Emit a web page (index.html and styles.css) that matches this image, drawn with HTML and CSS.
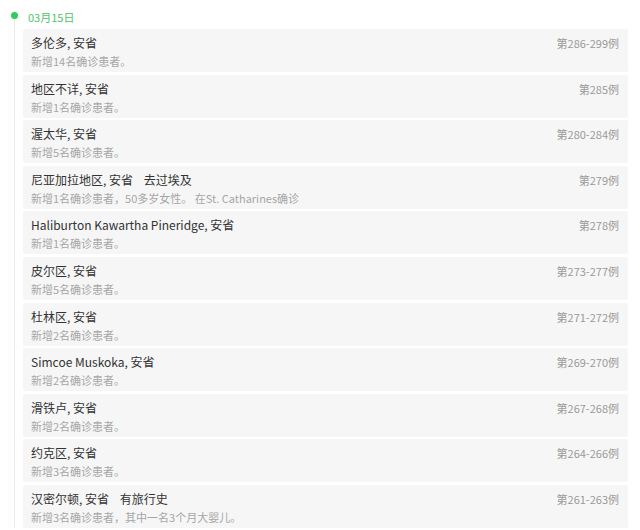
FILE: index.html
```html
<!DOCTYPE html>
<html lang="zh-CN">
<head>
    <meta charset="UTF-8">
    <title>确诊病例</title>
    <link rel="stylesheet" href="styles.css">
</head>
<body>
    <div class="timeline">
        <div class="day">
            <span class="dot"></span>
            <span class="date">03月15日</span>
        </div>
        <div class="list">
            <div class="item">
                <div class="top"><span class="name">多伦多, 安省</span><span class="num">第286-299例</span></div>
                <div class="desc">新增14名确诊患者。</div>
            </div>
            <div class="item">
                <div class="top"><span class="name">地区不详, 安省</span><span class="num">第285例</span></div>
                <div class="desc">新增1名确诊患者。</div>
            </div>
            <div class="item">
                <div class="top"><span class="name">渥太华, 安省</span><span class="num">第280-284例</span></div>
                <div class="desc">新增5名确诊患者。</div>
            </div>
            <div class="item">
                <div class="top"><span class="name">尼亚加拉地区, 安省 &nbsp;&nbsp; 去过埃及</span><span class="num">第279例</span></div>
                <div class="desc">新增1名确诊患者，50多岁女性。 在St. Catharines确诊</div>
            </div>
            <div class="item">
                <div class="top"><span class="name">Haliburton Kawartha Pineridge, 安省</span><span class="num">第278例</span></div>
                <div class="desc">新增1名确诊患者。</div>
            </div>
            <div class="item">
                <div class="top"><span class="name">皮尔区, 安省</span><span class="num">第273-277例</span></div>
                <div class="desc">新增5名确诊患者。</div>
            </div>
            <div class="item">
                <div class="top"><span class="name">杜林区, 安省</span><span class="num">第271-272例</span></div>
                <div class="desc">新增2名确诊患者。</div>
            </div>
            <div class="item">
                <div class="top"><span class="name">Simcoe Muskoka, 安省</span><span class="num">第269-270例</span></div>
                <div class="desc">新增2名确诊患者。</div>
            </div>
            <div class="item">
                <div class="top"><span class="name">滑铁卢, 安省</span><span class="num">第267-268例</span></div>
                <div class="desc">新增2名确诊患者。</div>
            </div>
            <div class="item">
                <div class="top"><span class="name">约克区, 安省</span><span class="num">第264-266例</span></div>
                <div class="desc">新增3名确诊患者。</div>
            </div>
            <div class="item">
                <div class="top"><span class="name">汉密尔顿, 安省 &nbsp;&nbsp; 有旅行史</span><span class="num">第261-263例</span></div>
                <div class="desc">新增3名确诊患者，其中一名3个月大婴儿。</div>
            </div>
        </div>
    </div>
</body>
</html>
```

FILE: styles.css
```css
body {
    margin: 0;
    background-color: #ffffff;
    font-family: "Noto Sans CJK SC", "Noto Sans", sans-serif;
    overflow: hidden;
}
.timeline {
    position: relative;
    padding: 9px 12px 0 23px;
}
.timeline::before {
    content: "";
    position: absolute;
    left: 14px;
    top: 16px;
    bottom: 0;
    width: 1px;
    background-color: #ececec;
}
.day {
    position: relative;
    height: 20px;
    font-size: 11px;
    line-height: 16px;
}
.dot {
    position: absolute;
    left: -12px;
    top: 3px;
    width: 7px;
    height: 7px;
    border-radius: 50%;
    background-color: #2ecc5a;
}
.date {
    display: block;
    padding-left: 5px;
    color: #4fc46b;
}
.item {
    background-color: #f6f6f6;
    border-radius: 2px;
    padding: 5px 9px 2px 8px;
    margin-bottom: 2.6px;
    height: 36px;
}
.top {
    display: flex;
    justify-content: space-between;
    align-items: center;
    height: 18px;
}
.name {
    font-size: 12px;
    color: #333333;
    line-height: 18px;
}
.num {
    font-size: 11px;
    color: #9a9a9a;
}
.desc {
    font-size: 11px;
    color: #a6a6a6;
    line-height: 18px;
}
```
